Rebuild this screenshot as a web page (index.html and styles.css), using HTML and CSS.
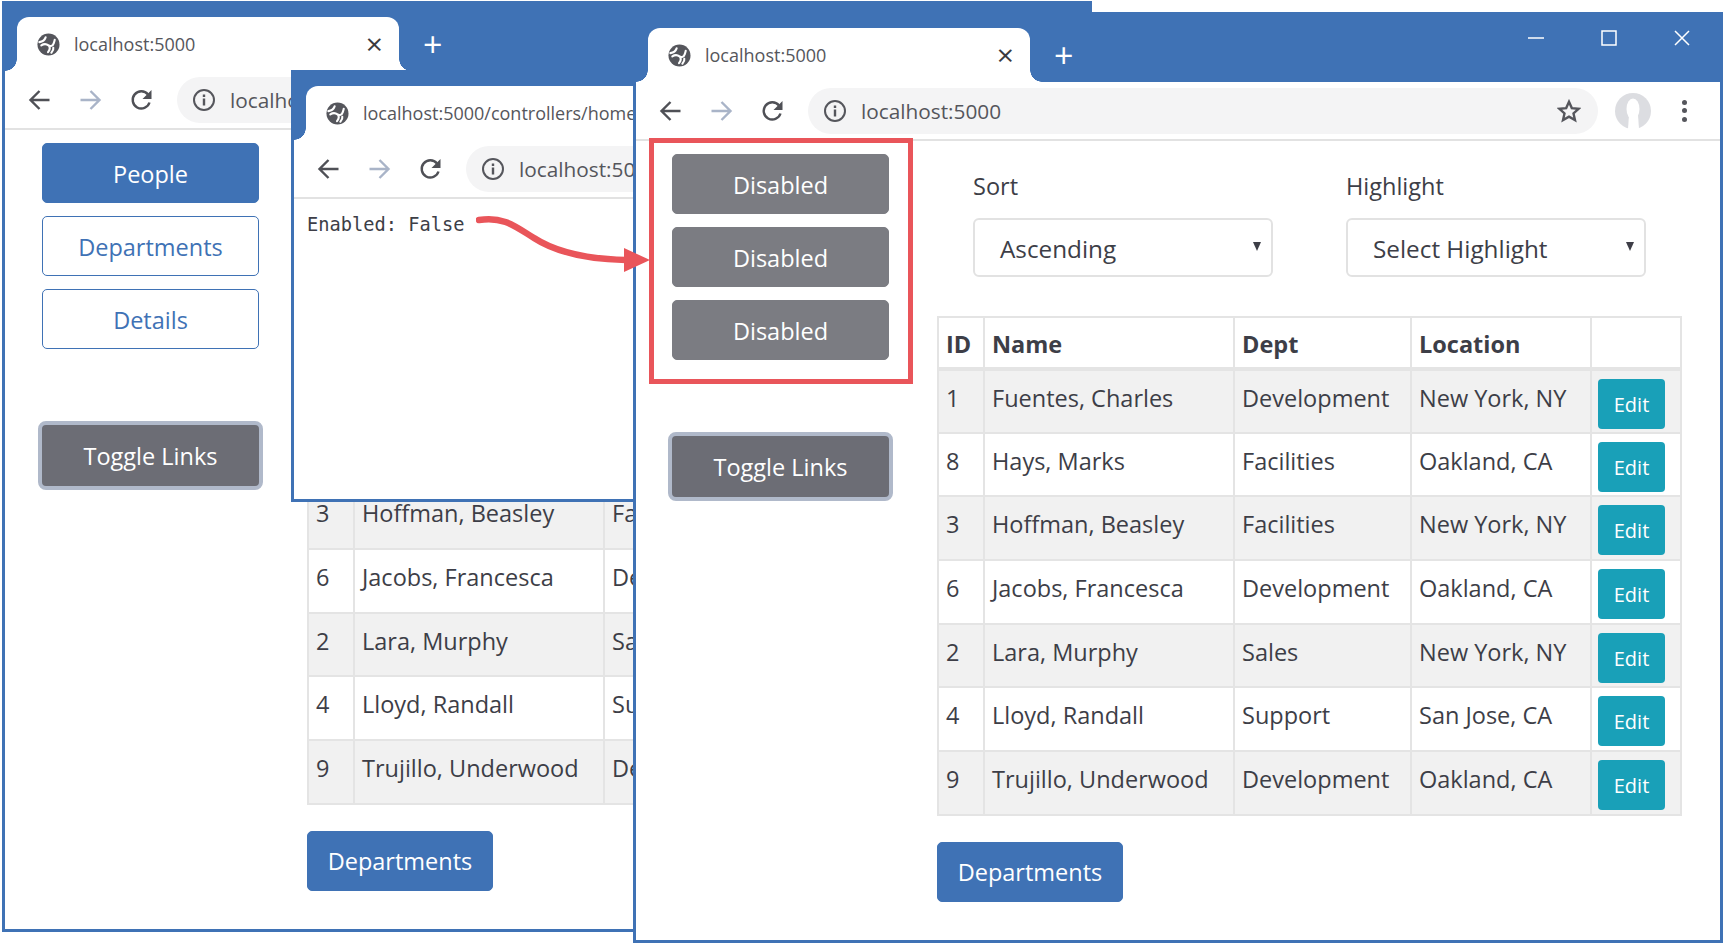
FILE: index.html
```html
<!DOCTYPE HTML>
<html>
  <head>
    <title>Enabled and disabled links</title>
    <meta charset="utf-8" />
    <link rel="stylesheet" href="styles.css">
  </head>
  <body>
    <svg class="sprites" width="0" height="0">
      <symbol id="i-globe" viewBox="0 0 24 24">
        <circle cx="12" cy="12" r="11.500" fill="#55565c"/>
        <path fill="none" stroke="#fff" stroke-width="2.200" stroke-linecap="round" d="M2.500 9.500c3.500-.5 5.500-2 6.500-5M4.500 13c3-2 5.500-1.500 7.500 0s4.500.5 5.500-2.500 1-3.500 1-3.500M12.500 13.500c1.500 2 1 4-1 6.500M17 15.500c.5 2-.5 3.500-2 5"/>
      </symbol>
      <symbol id="i-back" viewBox="0 0 24 24">
        <path fill="none" stroke="currentColor" stroke-width="2.400" d="M22 12H3M12 3l-9 9 9 9"/>
      </symbol>
      <symbol id="i-forward" viewBox="0 0 24 24">
        <path fill="none" stroke="currentColor" stroke-width="2.400" d="M2 12h19M12 3l9 9-9 9"/>
      </symbol>
      <symbol id="i-reload" viewBox="0 0 24 24">
        <path fill="none" stroke="currentColor" stroke-width="2.400" d="M20 14.500A8.600 8.600 0 1 1 18.500 6.500"/>
        <path fill="currentColor" d="M22 2v9h-9z"/>
      </symbol>
      <symbol id="i-info" viewBox="0 0 24 24">
        <circle cx="12" cy="12" r="10" fill="none" stroke="currentColor" stroke-width="2"/>
        <path fill="currentColor" d="M10.800 10.500h2.400v7h-2.400zM10.800 6.500h2.400v2.400h-2.400z"/>
      </symbol>
      <symbol id="i-star" viewBox="0 0 24 24">
        <path fill="none" stroke="currentColor" stroke-width="2.400" d="M12 2.800l2.800 6.300 6.800.7-5.100 4.600 1.500 6.700-6-3.500-6 3.500 1.500-6.700-5.100-4.600 6.800-.7z"/>
      </symbol>
    </svg>

    <div class="window window-first">
      <div class="titlebar">
        <div class="tab">
          <svg class="favicon"><use href="#i-globe"/></svg>
          <span class="tab-title">localhost:5000</span>
          <span class="tab-close">×</span>
        </div>
        <span class="new-tab">+</span>
      </div>
      <div class="toolbar">
        <svg class="nav"><use href="#i-back"/></svg>
        <svg class="nav nav-off"><use href="#i-forward"/></svg>
        <svg class="nav"><use href="#i-reload"/></svg>
        <div class="omnibox">
          <svg class="info"><use href="#i-info"/></svg>
          <span>localhost:5000</span>
        </div>
      </div>
      <div class="page">
        <div class="sidebar">
          <a class="btn btn-primary">People</a>
          <a class="btn btn-outline">Departments</a>
          <a class="btn btn-outline">Details</a>
          <a class="btn btn-toggle">Toggle Links</a>
        </div>
        <div class="main main-nofilter">
          <table class="people people-short">
            <colgroup><col class="col-id"><col class="col-name"><col class="col-dept"></colgroup>
            <tr><th>ID</th><th>Name</th><th>Dept</th></tr>
            <tr><td>1</td><td>Fuentes, Charles</td><td>Development</td></tr>
            <tr><td>8</td><td>Hays, Marks</td><td>Facilities</td></tr>
            <tr><td>3</td><td>Hoffman, Beasley</td><td>Facilities</td></tr>
            <tr><td>6</td><td>Jacobs, Francesca</td><td>Development</td></tr>
            <tr><td>2</td><td>Lara, Murphy</td><td>Sales</td></tr>
            <tr><td>4</td><td>Lloyd, Randall</td><td>Support</td></tr>
            <tr><td>9</td><td>Trujillo, Underwood</td><td>Development</td></tr>
          </table>
          <a class="btn btn-primary btn-inline">Departments</a>
        </div>
      </div>
    </div>

    <div class="window window-json">
      <div class="titlebar">
        <div class="tab">
          <svg class="favicon"><use href="#i-globe"/></svg>
          <span class="tab-title">localhost:5000/controllers/home</span>
        </div>
      </div>
      <div class="toolbar">
        <svg class="nav"><use href="#i-back"/></svg>
        <svg class="nav nav-off"><use href="#i-forward"/></svg>
        <svg class="nav"><use href="#i-reload"/></svg>
        <div class="omnibox">
          <svg class="info"><use href="#i-info"/></svg>
          <span>localhost:5000</span>
        </div>
      </div>
      <pre class="plain">Enabled: False</pre>
    </div>

    <div class="window window-front">
      <div class="titlebar">
        <div class="tab">
          <svg class="favicon"><use href="#i-globe"/></svg>
          <span class="tab-title">localhost:5000</span>
          <span class="tab-close">×</span>
        </div>
        <span class="new-tab">+</span>
        <div class="controls">
          <svg width="16" height="16" viewBox="0 0 16 16"><path stroke="#fff" stroke-width="1.500" d="M0 8h16"/></svg>
          <svg width="16" height="16" viewBox="0 0 16 16"><path fill="none" stroke="#fff" stroke-width="1.500" d="M1 1h14v14H1z"/></svg>
          <svg width="16" height="16" viewBox="0 0 16 16"><path stroke="#fff" stroke-width="1.500" d="M1 1l14 14M15 1L1 15"/></svg>
        </div>
      </div>
      <div class="toolbar">
        <svg class="nav"><use href="#i-back"/></svg>
        <svg class="nav nav-off"><use href="#i-forward"/></svg>
        <svg class="nav"><use href="#i-reload"/></svg>
        <div class="omnibox">
          <svg class="info"><use href="#i-info"/></svg>
          <span>localhost:5000</span>
          <svg class="star"><use href="#i-star"/></svg>
        </div>
        <svg class="avatar" viewBox="0 0 36 36">
          <circle cx="18" cy="18" r="18" fill="#dcdde1"/>
          <ellipse cx="18" cy="16" rx="6.500" ry="10.500" fill="#fff"/>
          <path fill="#fff" d="M13 36l1-14h9l1 14z"/>
        </svg>
        <div class="menu-dots"><i></i><i></i><i></i></div>
      </div>
      <div class="page">
        <div class="sidebar">
          <a class="btn btn-disabled">Disabled</a>
          <a class="btn btn-disabled">Disabled</a>
          <a class="btn btn-disabled">Disabled</a>
          <a class="btn btn-toggle">Toggle Links</a>
        </div>
        <div class="main">
          <div class="filters">
            <div class="filter">
              <label>Sort</label>
              <div class="select">Ascending</div>
            </div>
            <div class="filter">
              <label>Highlight</label>
              <div class="select">Select Highlight</div>
            </div>
          </div>
          <table class="people">
            <colgroup><col class="col-id"><col class="col-name"><col class="col-dept"><col class="col-loc"><col class="col-edit"></colgroup>
            <tr><th>ID</th><th>Name</th><th>Dept</th><th>Location</th><th></th></tr>
            <tr><td>1</td><td>Fuentes, Charles</td><td>Development</td><td>New York, NY</td><td class="cell-edit"><a class="btn-edit">Edit</a></td></tr>
            <tr><td>8</td><td>Hays, Marks</td><td>Facilities</td><td>Oakland, CA</td><td class="cell-edit"><a class="btn-edit">Edit</a></td></tr>
            <tr><td>3</td><td>Hoffman, Beasley</td><td>Facilities</td><td>New York, NY</td><td class="cell-edit"><a class="btn-edit">Edit</a></td></tr>
            <tr><td>6</td><td>Jacobs, Francesca</td><td>Development</td><td>Oakland, CA</td><td class="cell-edit"><a class="btn-edit">Edit</a></td></tr>
            <tr><td>2</td><td>Lara, Murphy</td><td>Sales</td><td>New York, NY</td><td class="cell-edit"><a class="btn-edit">Edit</a></td></tr>
            <tr><td>4</td><td>Lloyd, Randall</td><td>Support</td><td>San Jose, CA</td><td class="cell-edit"><a class="btn-edit">Edit</a></td></tr>
            <tr><td>9</td><td>Trujillo, Underwood</td><td>Development</td><td>Oakland, CA</td><td class="cell-edit"><a class="btn-edit">Edit</a></td></tr>
          </table>
          <a class="btn btn-primary btn-inline">Departments</a>
        </div>
      </div>
    </div>

    <!-- callout drawn over the windows -->
    <div class="callout-box"></div>
    <svg class="callout-arrow" viewBox="0 0 180 60" width="180" height="60">
      <path fill="none" stroke="#e9555a" stroke-width="6.500" stroke-linecap="round" d="M3 5C28 1 40 12 58 23 78 36 105 44 150 45"/>
      <path fill="#e9555a" d="M148 33l26 12-26 12z"/>
    </svg>
  </body>
</html>
```

FILE: styles.css
```css
*{
  margin: 0;
  padding: 0;
  box-sizing: border-box;
}
body{
  width: 1725px;
  height: 946px;
  position: relative;
  overflow: hidden;
  background: #fff;
  color: #3d3e47;
  font-family: "Open Sans", "Noto Sans", sans-serif;
  font-size: 23.500px;
}
.sprites{
  position: absolute;
}

/* windows sit on a free canvas */
.window{
  position: absolute;
  width: 1090px;
  background: #fff;
  border: 3px solid #3f72b5;
  border-top: 0;
  overflow: hidden;
}
.window-first{
  left: 2px;
  top: 1px;
  height: 931px;
}
.window-first .page{
  margin-left: 1px;
}
.window-json{
  left: 291px;
  top: 70px;
  width: 700px;
  height: 432px;
}
.window-front{
  left: 633px;
  top: 12px;
  height: 931px;
}

.titlebar{
  height: 70px;
  background: #3f72b5;
  display: flex;
  align-items: flex-end;
}
.tab{
  position: relative;
  width: 382px;
  height: 54px;
  margin-left: 12px;
  padding: 0 16px 0 20px;
  display: flex;
  align-items: center;
  gap: 14px;
  background: #fff;
  border-radius: 12px 12px 0 0;
  color: #55565c;
  font-size: 18px;
}
.tab::before,.tab::after{
  content: "";
  position: absolute;
  bottom: 0;
  width: 12px;
  height: 12px;
}
.tab::before{
  left: -12px;
  background: radial-gradient(circle at 0 0, #3f72b5 11.500px, #fff 12px);
}
.tab::after{
  right: -12px;
  background: radial-gradient(circle at 100% 0, #3f72b5 11.500px, #fff 12px);
}
.favicon{
  width: 23px;
  height: 23px;
  flex: none;
}
.tab-title{
  white-space: nowrap;
}
.tab-close{
  margin-left: auto;
  font-size: 30px;
  line-height: 1;
  color: #3a3a40;
}
.new-tab{
  align-self: center;
  margin: 16px 0 0 24px;
  color: #fff;
  font-size: 34px;
  line-height: 1;
}
.controls{
  align-self: flex-start;
  margin: 18px 0 0 auto;
  padding-right: 30px;
  display: flex;
  gap: 57px;
}

.toolbar{
  height: 59px;
  padding-left: 9px;
  display: flex;
  align-items: center;
  border-bottom: 2px solid #e2e2e2;
  color: #55565c;
}
.nav{
  width: 51px;
  height: 24px;
  flex: none;
  color: #4f5056;
}
.nav-off{
  color: #a9b4c8;
}
.omnibox{
  width: 790px;
  height: 46px;
  margin-left: 10px;
  padding: 0 17px 0 15px;
  flex: none;
  display: flex;
  align-items: center;
  gap: 14px;
  background: #f4f4f5;
  border-radius: 23px;
  font-size: 20.800px;
  white-space: nowrap;
}
.info{
  width: 24px;
  height: 24px;
  flex: none;
}
.star{
  width: 24px;
  height: 24px;
  margin-left: auto;
}
.avatar{
  width: 36px;
  height: 36px;
  margin-left: 17px;
}
.menu-dots{
  margin-left: 31px;
  display: flex;
  flex-direction: column;
  gap: 3.500px;
}
.menu-dots i{
  width: 5px;
  height: 5px;
  border-radius: 50%;
  background: #55565c;
}

.page{
  display: flex;
}
.sidebar{
  width: 289px;
  padding-top: 13px;
  flex: none;
  display: flex;
  flex-direction: column;
  align-items: center;
  gap: 13px;
}
.btn{
  width: 217px;
  height: 60px;
  padding-top: 1px;
  display: flex;
  align-items: center;
  justify-content: center;
  border-radius: 5px;
  border: 1px solid #3f72b5;
}
.btn-primary{
  background: #3f72b5;
  color: #fff;
}
.btn-outline{
  color: #3f72b5;
}
.btn-disabled{
  background: #7b7c82;
  border-color: #7b7c82;
  color: #fff;
}
.btn-toggle{
  width: 225px;
  height: 69px;
  margin-top: 59px;
  background: #6c6d75;
  border: 4px solid #b0b9ca;
  border-radius: 8px;
  color: #fff;
}
.btn-inline{
  width: 186px;
  margin-top: 26px;
}

.main{
  padding-left: 12px;
}
.main-nofilter{
  padding-top: 175px;
}
.filters{
  height: 175px;
  padding: 30px 0 0 36px;
  display: flex;
  gap: 73px;
}
.filter label{
  display: block;
  height: 47px;
  line-height: 30px;
}
.select{
  width: 300px;
  height: 59px;
  padding: 2px 0 0 25px;
  position: relative;
  display: flex;
  align-items: center;
  border: 2px solid #e2e2e2;
  border-radius: 6px;
  font-size: 24.300px;
}
.select::after{
  content: "";
  position: absolute;
  right: 10px;
  top: 22px;
  border-left: 4px solid transparent;
  border-right: 4px solid transparent;
  border-top: 9px solid #3d3e47;
}

.people{
  table-layout: fixed;
  width: 743px;
  border-collapse: collapse;
}
.people-short{
  width: 473px;
}
.col-id{
  width: 46px;
}
.col-name{
  width: 250px;
}
.col-dept{
  width: 177px;
}
.col-loc{
  width: 180px;
}
.col-edit{
  width: 90px;
}
.people th,.people td{
  padding: 12px 7px 0;
  border: 2px solid #e4e4e4;
  text-align: left;
  vertical-align: top;
  white-space: nowrap;
  line-height: 30px;
}
.people th{
  height: 52px;
  padding-top: 11px;
  border-bottom-width: 4px;
  font-weight: 700;
}
.people td{
  height: 63.700px;
}
.people tr:nth-child(even) td{
  background: #f1f1f1;
}
.people td.cell-edit{
  padding: 8px 0 0 6px;
  line-height: 1;
}
.btn-edit{
  width: 67px;
  height: 50px;
  padding-top: 2px;
  display: flex;
  align-items: center;
  justify-content: center;
  background: #19a0b8;
  border-radius: 4px;
  color: #fff;
  font-size: 20px;
}

.plain{
  padding: 13px 0 0 13px;
  font-family: "DejaVu Sans Mono", "Liberation Mono", monospace;
  font-size: 18.700px;
  line-height: 26px;
}

/* red annotation on top of everything */
.callout-box{
  position: absolute;
  left: 649px;
  top: 138px;
  width: 264px;
  height: 246px;
  border: 5px solid #e9555a;
}
.callout-arrow{
  position: absolute;
  left: 476px;
  top: 215px;
}
```
